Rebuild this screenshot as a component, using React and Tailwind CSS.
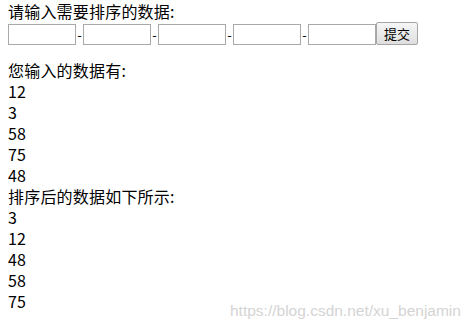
export default function App() {
  const inputs = [0, 1, 2, 3, 4];
  const entered = [12, 3, 58, 75, 48];
  const sorted = [...entered].sort((a, b) => a - b);

  return (
    <div className="relative w-[474px] h-[330px] bg-white overflow-hidden text-black">
      <div className="px-2 pt-[1px] text-[16px] leading-[21px] tracking-[0.2px] font-['Noto_Sans_CJK_SC',sans-serif]">
        <div>请输入需要排序的数据:</div>

        {/* input row */}
        <div className="flex items-end h-[23px] tracking-normal">
          {inputs.map((i) => (
            <div key={i} className="flex items-end">
              {i > 0 && <span className="w-[7px] text-center text-[13px] leading-[21px]">-</span>}
              <input
                type="text"
                className="w-[68px] h-[21px] border border-[#a9a9a9] bg-white outline-none"
              />
            </div>
          ))}
          <button className="w-[42px] h-[23px] border border-[#a6a6a6] rounded-[2px] bg-gradient-to-b from-[#f6f6f6] to-[#dedede] text-[13px] leading-[19px] text-black font-['Noto_Sans_CJK_SC',sans-serif]">
            提交
          </button>
        </div>

        <div className="mt-[15px]">您输入的数据有:</div>
        {entered.map((n, i) => (
          <div key={"e" + i}>{n}</div>
        ))}
        <div>排序后的数据如下所示:</div>
        {sorted.map((n, i) => (
          <div key={"s" + i}>{n}</div>
        ))}
      </div>

      {/* watermark */}
      <div className="absolute left-[230px] top-[301px] text-[15.5px] leading-[20px] text-[#d4d4d4] font-['Liberation_Sans',sans-serif]">
        https://blog.csdn.net/xu_benjamin
      </div>
    </div>
  );
}
